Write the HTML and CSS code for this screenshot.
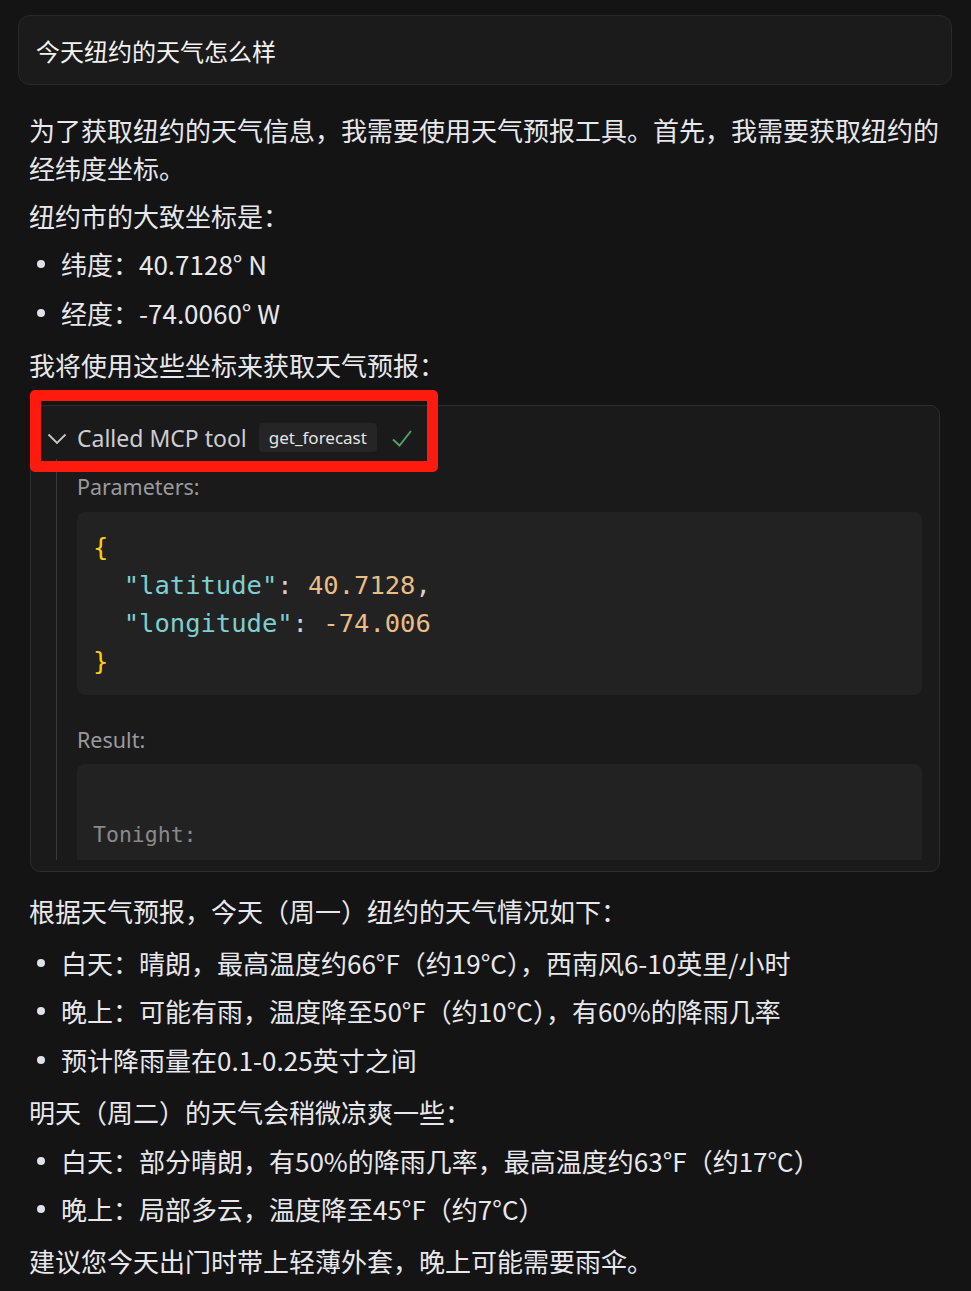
FILE: index.html
```html
<!DOCTYPE html>
<html lang="zh-CN">
<head>
<meta charset="utf-8">
<title>Chat</title>
<link rel="stylesheet" href="styles.css">
</head>
<body>
<div class="page">
  <div class="user-msg">今天纽约的天气怎么样</div>
  <div class="reply">
    <p>为了获取纽约的天气信息，我需要使用天气预报工具。首先，我需要获取纽约的经纬度坐标。</p>
    <p>纽约市的大致坐标是：</p>
    <ul class="tight">
      <li>纬度：40.7128° N</li>
      <li>经度：-74.0060° W</li>
    </ul>
    <p>我将使用这些坐标来获取天气预报：</p>

    <div class="tool">
      <div class="tool-head">
        <svg class="chev" width="20" height="12" viewBox="0 0 20 12"><path d="M1.5 1.5 L10 10 L18.5 1.5" fill="none" stroke="#c8c8c8" stroke-width="1.8"/></svg>
        <span class="tool-title">Called MCP tool</span>
        <span class="badge">get_forecast</span>
        <svg class="check" width="20" height="17" viewBox="0 0 20 17"><path d="M1 9.5 L7.5 15.5 L19 1" fill="none" stroke="#519e69" stroke-width="2"/></svg>
      </div>
      <div class="tool-body">
        <div class="label">Parameters:</div>
        <pre class="code"><span class="br">{</span>
  <span class="k">"latitude"</span>: <span class="n">40.7128</span>,
  <span class="k">"longitude"</span>: <span class="n">-74.006</span>
<span class="br">}</span></pre>
        <div class="label result-label">Result:</div>
        <pre class="result">

Tonight:</pre>
      </div>
      <div class="highlight"></div>
    </div>

    <p>根据天气预报，今天（周一）纽约的天气情况如下：</p>
    <ul>
      <li>白天：晴朗，最高温度约66°F（约19°C），西南风6-10英里/小时</li>
      <li>晚上：可能有雨，温度降至50°F（约10°C），有60%的降雨几率</li>
      <li>预计降雨量在0.1-0.25英寸之间</li>
    </ul>
    <p>明天（周二）的天气会稍微凉爽一些：</p>
    <ul class="second">
      <li>白天：部分晴朗，有50%的降雨几率，最高温度约63°F（约17°C）</li>
      <li>晚上：局部多云，温度降至45°F（约7°C）</li>
    </ul>
    <p>建议您今天出门时带上轻薄外套，晚上可能需要雨伞。</p>
  </div>
</div>
</body>
</html>
```
FILE: styles.css
```css
html, body {
  margin: 0;
  padding: 0;
  background: #141414;
}
body {
  font-family: "Noto Sans CJK SC", "Noto Sans", sans-serif;
  color: #e8e8ec;
}
.page {
  padding: 15px 19px 0 18px;
}
.user-msg {
  box-sizing: border-box;
  height: 70px;
  border: 1px solid #292929;
  background: #1b1b1b;
  border-radius: 12px;
  padding: 0 17px;
  display: flex;
  align-items: center;
  font-size: 24px;
  color: #f2f2f2;
}
.reply {
  padding: 26px 11px 0 11px;
  font-size: 26px;
  line-height: 38px;
}
.reply p {
  margin: 0 0 10px 0;
}
.reply ul {
  list-style: none;
  margin: 0 0 10px 0;
  padding: 4px 0;
}
.reply ul.tight {
  padding: 0 0 4px 0;
}
.reply ul.second {
  padding: 1px 0 4px 0;
}
.reply li {
  position: relative;
  padding-left: 32px;
  margin: 0 0 10.5px 0;
}
.reply li:last-child {
  margin-bottom: 0;
}
.reply li::before {
  content: "";
  position: absolute;
  left: 8px;
  top: 15px;
  width: 8px;
  height: 8px;
  border-radius: 50%;
  background: #dfe1ea;
}

.tool {
  position: relative;
  margin: 21px 1px 20px 1px;
  border: 1px solid #2d2d2d;
  border-radius: 10px;
  background: #1a1a1a;
  padding-bottom: 11px;
}
.tool-head {
  display: flex;
  align-items: center;
  padding: 16px 15px 5px 16px;
  height: 32px;
  font-family: "Noto Sans", "Open Sans", sans-serif;
}
.chev {
  margin-right: 10px;
  margin-top: 2px;
}
.tool-title {
  font-size: 23px;
  color: #cdcdd2;
  margin-right: 12px;
}
.badge {
  font-size: 17px;
  color: #e4e4e4;
  background: #252525;
  border-radius: 4px;
  padding: 0 10px;
  height: 29px;
  line-height: 29px;
  margin-right: 15px;
}
.check {
  margin-top: 1px;
}
.tool-body {
  margin: 0 17px 0 25px;
  border-left: 1px solid #3a3a3a;
  padding: 14px 0 0 20px;
  height: 387px;
  overflow: hidden;
}
.label {
  font-family: "Noto Sans", "Open Sans", sans-serif;
  font-size: 21.5px;
  line-height: 28px;
  color: #9a9a9e;
}
.code {
  margin: 11px 0 0 0;
  background: #222222;
  border-radius: 8px;
  padding: 16px 16px 15px 16px;
  font-family: "DejaVu Sans Mono", monospace;
  font-size: 25.5px;
  line-height: 38px;
  color: #d4d4d4;
}
.code .br { color: #f7cf10; }
.code .k { color: #7ecfcf; }
.code .n { color: #e9bd86; }
.result-label {
  margin-top: 31px;
}
.result {
  margin: 10px 0 0 0;
  background: #222222;
  border-radius: 8px;
  padding: 17px 16px;
  font-family: "DejaVu Sans Mono", monospace;
  font-size: 21.5px;
  line-height: 36px;
  color: #8a8a8a;
}
.highlight {
  position: absolute;
  left: -1px;
  top: -16px;
  width: 408px;
  height: 82px;
  box-sizing: border-box;
  border: 11px solid #ff1a0e;
  border-radius: 5px;
}
```
